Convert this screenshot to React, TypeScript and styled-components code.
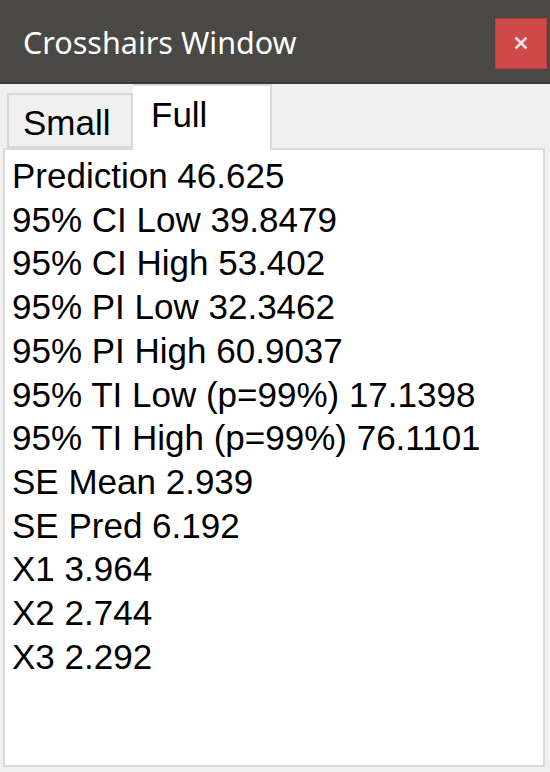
import {memo} from "react";
import styled, {createGlobalStyle} from "styled-components";

const GlobalStyle = createGlobalStyle`
  html, body {
    margin: 0;
    padding: 0;
    height: 100%;
    background: #f0f0f0;
  }
  #root {
    height: 100%;
  }
`

const lines = [
    "Prediction 46.625",
    "95% CI Low 39.8479",
    "95% CI High 53.402",
    "95% PI Low 32.3462",
    "95% PI High 60.9037",
    "95% TI Low (p=99%) 17.1398",
    "95% TI High (p=99%) 76.1101",
    "SE Mean 2.939",
    "SE Pred 6.192",
    "X1 3.964",
    "X2 2.744",
    "X3 2.292",
]

const CloseIcon = () => (
    <svg width="14" height="14" viewBox="0 0 14 14">
        <path d="M2.5 2.5 L11.5 11.5 M11.5 2.5 L2.5 11.5" stroke="#f6e4e4" strokeWidth="2.6" strokeLinecap="square"/>
    </svg>
)

export default memo(function App() {
    return (
        <Window>
            <GlobalStyle/>
            <TitleBar>
                <Title>Crosshairs Window</Title>
                <CloseButton aria-label="close">
                    <CloseIcon/>
                </CloseButton>
            </TitleBar>
            <Body>
                <TabStrip>
                    <Tab active={false}>Small</Tab>
                    <Tab active={true}>Full</Tab>
                </TabStrip>
                <Panel>
                    {lines.map(l => <Line key={l}>{l}</Line>)}
                </Panel>
            </Body>
        </Window>
    )
})

const Window = styled.div`
  display: flex;
  flex-direction: column;
  height: 100vh;
  width: 100%;
`
const TitleBar = styled.div`
  display: flex;
  align-items: center;
  justify-content: space-between;
  height: 82px;
  padding-left: 23px;
  padding-right: 3px;
  background-color: #4a4845;
  border-bottom: 2px solid #3b3936;
`
const Title = styled.span`
  font-family: "Noto Sans", "Open Sans", sans-serif;
  font-size: 30.5px;
  color: #ffffff;
  margin-top: 1px;
`
const CloseButton = styled.div`
  display: flex;
  align-items: center;
  justify-content: center;
  width: 52px;
  height: 51px;
  box-sizing: border-box;
  margin-top: 4px;
  background-color: #d04a4c;
  border: 1px solid #b8403f;
`
const Body = styled.div`
  display: flex;
  flex: 1;
  flex-direction: column;
  padding: 0 5px 5px 3px;
  background-color: #f0f0f0;
`
const TabStrip = styled.div`
  display: flex;
  align-items: flex-end;
  height: 64px;
  padding-left: 4px;
`
const Tab = styled.div<{active: boolean}>`
  position: relative;
  z-index: ${p => p.active ? 1 : 0};
  box-sizing: border-box;
  width: ${p => p.active ? 139 : 126}px;
  height: ${p => p.active ? 66 : 55}px;
  margin-bottom: ${p => p.active ? -2 : 0}px;
  padding: ${p => p.active ? "11px 0 0 18px" : "10px 0 0 14px"};
  background-color: ${p => p.active ? "#ffffff" : "#f0f0f0"};
  border: 2px solid #d9d9d9;
  border-bottom: ${p => p.active ? "none" : "2px solid #d9d9d9"};
  border-left: ${p => p.active ? "none" : "2px solid #d9d9d9"};
  font-family: "Liberation Sans", Arial, sans-serif;
  font-size: 35px;
  line-height: 1;
  color: #000000;
`
const Panel = styled.div`
  display: flex;
  flex: 1;
  flex-direction: column;
  padding: 4px 6px 0 7px;
  background-color: #ffffff;
  border: 2px solid #dadada;
`
const Line = styled.span`
  font-family: "Liberation Sans", Arial, sans-serif;
  font-size: 35px;
  line-height: 43.7px;
  color: #000000;
  white-space: nowrap;
`
